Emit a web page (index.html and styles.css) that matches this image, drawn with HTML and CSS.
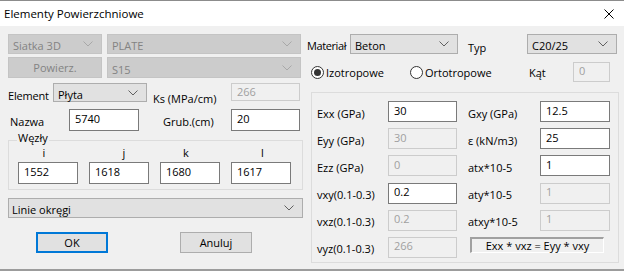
FILE: index.html
```html
<!DOCTYPE html>
<html>
	<head>
		<meta charset="utf-8">
		<title>Elementy Powierzchniowe</title>
		<link rel="stylesheet" href="styles.css">
	</head>
	<body>
		<div class="dialog">
			<div class="titlebar">
				<span class="title">Elementy Powierzchniowe</span>
				<svg class="close" width="10" height="10" viewBox="0 0 10 10"><path d="M0.5 0.5L9.5 9.5M9.5 0.5L0.5 9.5"/></svg>
			</div>
			<div class="content">
				<!-- lewa kolumna -->
				<div class="left">
					<div class="row r1">
						<div class="combo off w94">Siatka 3D<svg class="chev" viewBox="0 0 10 6"><path d="M0.5 0.5L5 5L9.5 0.5"/></svg></div>
						<div class="combo off w194">PLATE<svg class="chev" viewBox="0 0 10 6"><path d="M0.5 0.5L5 5L9.5 0.5"/></svg></div>
					</div>
					<div class="row r2">
						<button class="btn off w94">Powierz.</button>
						<div class="combo off w194">S15<svg class="chev" viewBox="0 0 10 6"><path d="M0.5 0.5L5 5L9.5 0.5"/></svg></div>
					</div>
					<div class="row r3">
						<span class="lbl l-element">Element</span>
						<div class="combo w94">Płyta<svg class="chev" viewBox="0 0 10 6"><path d="M0.5 0.5L5 5L9.5 0.5"/></svg></div>
						<span class="lbl l-ks">Ks (MPa/cm)</span>
						<input class="field small" value="266" disabled>
					</div>
					<div class="row r4">
						<span class="lbl l-nazwa">Nazwa</span>
						<input class="field w70" value="5740">
						<span class="lbl l-grub">Grub.(cm)</span>
						<input class="field w69" value="20">
					</div>
					<fieldset class="nodes">
						<legend>Węzły</legend>
						<div class="heads">
							<span>i</span><span>j</span><span>k</span><span>l</span>
						</div>
						<div class="cells">
							<input class="field" value="1552">
							<input class="field" value="1618">
							<input class="field" value="1680">
							<input class="field" value="1617">
						</div>
					</fieldset>
					<div class="combo wide">Linie okręgi<svg class="chev" viewBox="0 0 10 6"><path d="M0.5 0.5L5 5L9.5 0.5"/></svg></div>
					<div class="buttons">
						<button class="btn default">OK</button>
						<button class="btn">Anuluj</button>
					</div>
				</div>
				<!-- prawa kolumna -->
				<div class="right">
					<div class="row r1">
						<span class="lbl l-mat">Materiał</span>
						<div class="combo w108">Beton<svg class="chev" viewBox="0 0 10 6"><path d="M0.5 0.5L5 5L9.5 0.5"/></svg></div>
						<span class="lbl l-typ">Typ</span>
						<div class="combo w90">C20/25<svg class="chev" viewBox="0 0 10 6"><path d="M0.5 0.5L5 5L9.5 0.5"/></svg></div>
					</div>
					<div class="row r-radio">
						<label class="radio first"><span class="dot on"></span>Izotropowe</label>
						<label class="radio second"><span class="dot"></span>Ortotropowe</label>
						<span class="lbl l-kat">Kąt</span>
						<input class="field angle" value="0" disabled>
					</div>
					<div class="panel">
						<span class="lbl">Exx (GPa)</span>
						<input class="field" value="30">
						<span class="lbl col3">Gxy (GPa)</span>
						<input class="field" value="12.5">

						<span class="lbl">Eyy (GPa)</span>
						<input class="field" value="30" disabled>
						<span class="lbl col3">ε (kN/m3)</span>
						<input class="field" value="25">

						<span class="lbl">Ezz (GPa)</span>
						<input class="field" value="0" disabled>
						<span class="lbl col3">atx*10-5</span>
						<input class="field" value="1">

						<span class="lbl">vxy(0.1-0.3)</span>
						<input class="field" value="0.2">
						<span class="lbl col3">aty*10-5</span>
						<input class="field" value="1" disabled>

						<span class="lbl">vxz(0.1-0.3)</span>
						<input class="field" value="0.2" disabled>
						<span class="lbl col3">atxy*10-5</span>
						<input class="field" value="1" disabled>

						<span class="lbl">vyz(0.1-0.3)</span>
						<input class="field" value="266" disabled>
						<div class="formula">Exx * vxz = Eyy * vxy</div>
					</div>
				</div>
			</div>
		</div>
	</body>
</html>
```

FILE: styles.css
```css
*{
	margin: 0;
	padding: 0;
	box-sizing: border-box;
}
body{
	width: 624px;
	height: 271px;
	overflow: hidden;
	background: #f0f0f0;
	font-family: "Open Sans", sans-serif;
	font-size: 11px;
	color: #000;
}
.dialog{
	height: 271px;
	border-top: 1px solid #8c8c8c;
	border-bottom: 2px solid #9c9c9c;
}
.titlebar{
	height: 25px;
	background: #fff;
	display: flex;
	align-items: center;
	justify-content: space-between;
	padding: 0 10px 0 4px;
}
.title{
	font-size: 11.5px;
}
.close path{
	stroke: #000;
	stroke-width: 1;
	fill: none;
}
.content{
	display: flex;
}
.left{
	width: 303px;
	padding: 8px 0 0 8px;
}
.right{
	width: 317px;
	margin-left: 4px;
	padding-top: 8px;
}
.row{
	display: flex;
	align-items: center;
}
.lbl{
	padding-top: 3px;
	white-space: nowrap;
}

/* combo */
.combo{
	height: 100%;
	display: flex;
	align-items: center;
	padding: 3px 0 0 4px;
	background: #e1e1e1;
	border: 1px solid #adadad;
	white-space: nowrap;
}
.combo .chev{
	width: 10px;
	height: 6px;
	margin: -3px 8px 0 auto;
}
.chev path{
	fill: none;
	stroke: #606060;
	stroke-width: 1;
}
.combo.off{
	background: #cccccc;
	border-color: #c4c4c4;
	color: #838383;
}
.combo.off .chev path{
	stroke: #a8a8a8;
}
.w94{ width: 94px; }
.w194{ width: 194px; margin-left: 5px; }
.w108{ width: 108px; }
.w90{ width: 90px; }

/* button */
.btn{
	height: 21px;
	width: 72px;
	font: inherit;
	background: #e1e1e1;
	border: 1px solid #adadad;
	color: #000;
}
.btn.off{
	height: 100%;
	width: 94px;
	background: #cccccc;
	border-color: #c4c4c4;
	color: #838383;
}
.btn.default{
	border: 2px solid #0078d7;
}

/* pole tekstowe */
.field{
	height: 22px;
	font: inherit;
	color: #000;
	background: #fff;
	border: 1px solid #7a7a7a;
	padding: 0 5px 3px;
	outline: none;
}
.field:disabled{
	background: #f0f0f0;
	border-color: #cccccc;
	color: #a0a0a0;
}

.left .r1{ height: 20px; }
.left .r2{ height: 21px; margin-top: 3px; }
.left .r3{ height: 19px; margin-top: 5px; align-items: flex-start; }
.left .r4{ height: 22px; margin-top: 7px; }
.l-element{ width: 45px; padding-top: 5px; letter-spacing: -0.2px; }
.l-ks{ width: 78px; margin-left: 6px; padding-top: 8px; }
.field.small{ width: 69px; height: 18px; padding-bottom: 1px; }
.l-nazwa{ width: 59px; margin-left: 2px; }
.l-grub{ width: 68px; margin-left: 24px; }
.w70{ width: 70px; }
.w69{ width: 69px; }

/* Węzły */
.nodes{
	width: 295px;
	margin-top: 1px;
	border: 1px solid #dcdcdc;
	padding: 0 10px 5px 9px;
}
.nodes legend{
	line-height: 12px;
	padding: 0 1px 4px;
	margin-left: -1px;
}
.heads{
	display: grid;
	grid-template-columns: repeat(4, 60px);
	column-gap: 11px;
	height: 10px;
	line-height: 10px;
	text-align: center;
}
.heads span:nth-child(1){ padding-right: 8px; }
.heads span:nth-child(2){ padding-left: 10px; }
.heads span:nth-child(3){ padding-right: 8px; }
.heads span:nth-child(4){ padding-left: 3px; }
.cells{
	display: grid;
	grid-template-columns: repeat(4, 60px);
	column-gap: 11px;
	margin-top: 4px;
}
.cells .field{
	width: 60px;
}
.combo.wide{
	width: 295px;
	height: 20px;
	margin-top: 8px;
	padding-left: 3px;
}
.buttons{
	display: flex;
	gap: 72px;
	margin-top: 14px;
	padding-left: 28px;
}

/* prawa strona */
.right .r1{ height: 20px; }
.l-mat{ width: 43px; letter-spacing: -0.4px; }
.l-typ{ width: 59px; margin-left: 10px; padding-top: 7px; }
.r-radio{ height: 20px; margin-top: 8px; }
.radio{
	display: flex;
	align-items: center;
	gap: 2px;
	padding-top: 1px;
}
.radio.first{ width: 99px; margin-left: 4px; }
.radio.second{ width: 119px; }
.dot{
	width: 13px;
	height: 13px;
	border: 1px solid #333;
	border-radius: 50%;
	background: #fff;
	display: flex;
	align-items: center;
	justify-content: center;
}
.dot.on::before{
	content: "";
	width: 7px;
	height: 7px;
	border-radius: 50%;
	background: #333;
}
.l-kat{ width: 44px; padding-top: 0; }
.field.angle{ width: 37px; height: 20px; }
.panel{
	width: 308px;
	height: 171px;
	margin: 10px 0 0 4px;
	border: 1px solid #dcdcdc;
	padding: 8px 0 0 5px;
	display: grid;
	grid-template-columns: 71px 69px 83px 70px;
	grid-auto-rows: 21px;
	row-gap: 6.2px;
	align-items: center;
}
.panel .field{
	width: 100%;
	height: 21px;
}
.panel .col3{
	padding-left: 11px;
}
.formula{
	grid-column: 3 / span 2;
	align-self: start;
	width: 134px;
	height: 16px;
	margin-left: 13px;
	border-top: 2px solid #a0a0a0;
	border-left: 2px solid #a0a0a0;
	border-bottom: 1px solid #fff;
	border-right: 1px solid #fff;
	text-align: center;
	line-height: 13px;
	white-space: nowrap;
}
```
